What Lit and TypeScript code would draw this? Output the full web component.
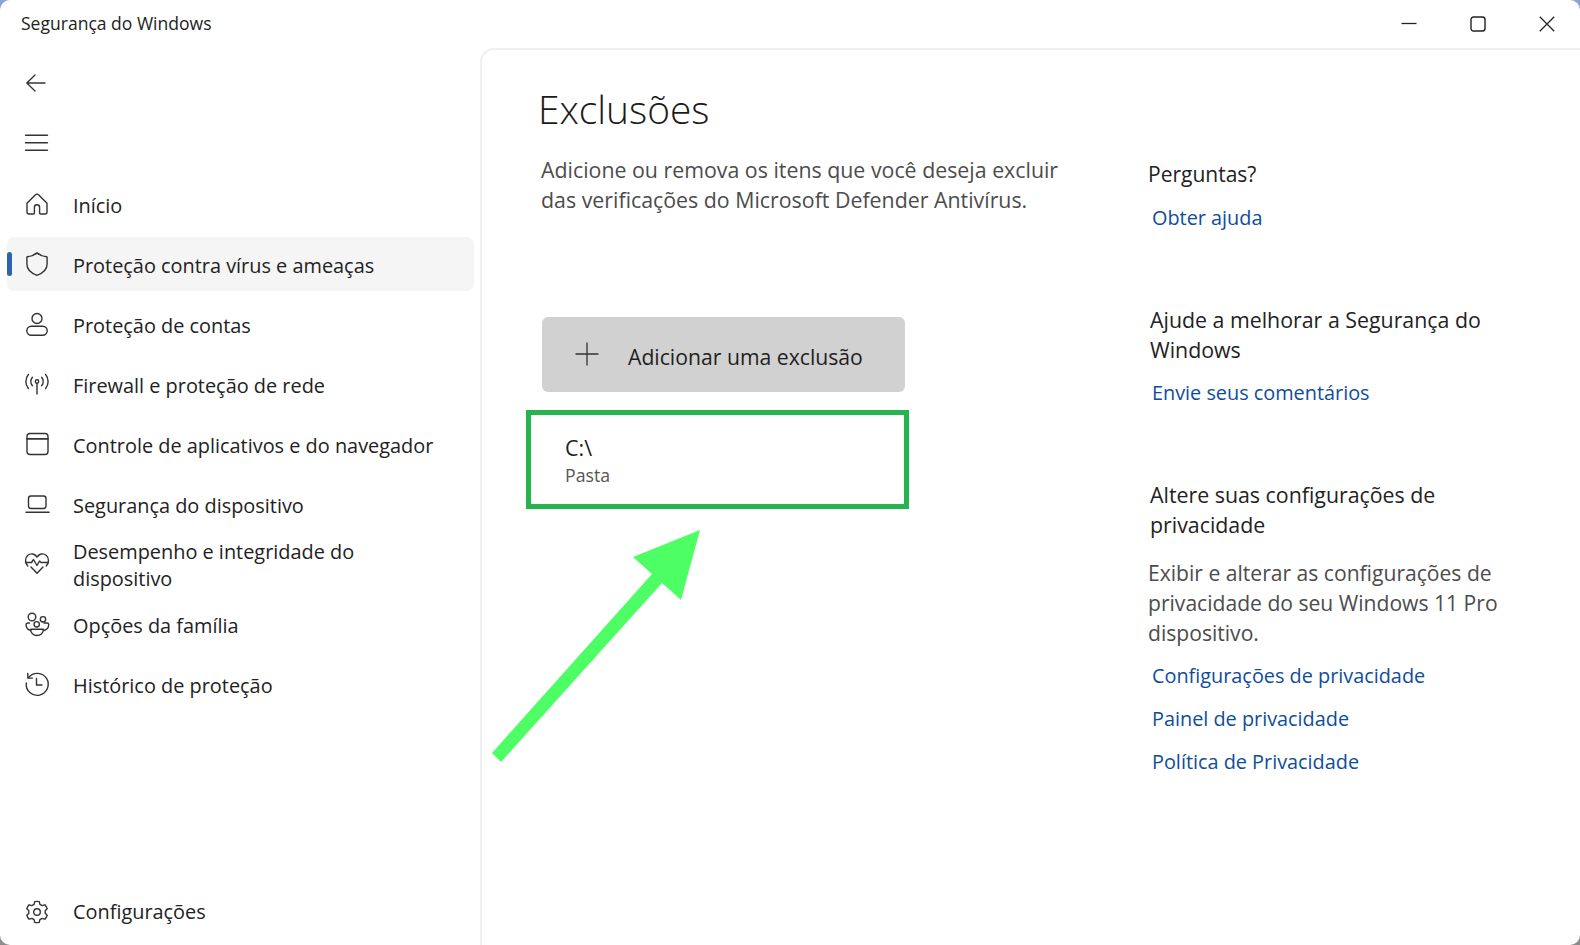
import { LitElement, html, css, svg } from "lit";
import { customElement } from "lit/decorators.js";

const I = (c: unknown) => html`<svg class="ic" viewBox="0 0 24 24" fill="none" stroke="#333" stroke-width="1.4" stroke-linecap="round" stroke-linejoin="round">${c}</svg>`;

const icons = {
  home: svg`<path d="M2 11.2 10.2 2.9a2.5 2.5 0 0 1 3.6 0L22 11.2V20a2 2 0 0 1-2 2h-4.4a1 1 0 0 1-1-1v-5.6a2.6 2.6 0 0 0-5.2 0V21a1 1 0 0 1-1 1H4a2 2 0 0 1-2-2z"/>`,
  shield: svg`<path d="M12 .9C9.2 3.300 6 4.500 2.400 4.700a.6.6 0 0 0-.5.6V12c0 5 3.400 8.900 10.100 11.300 6.700-2.400 10.100-6.300 10.100-11.300V5.300a.6.6 0 0 0-.5-.6C18 4.500 14.800 3.300 12 .9z"/>`,
  person: svg`<circle cx="12" cy="6.500" r="5"/><rect x="1.800" y="14.200" width="20.400" height="9" rx="4.500"/>`,
  wifi: svg`<circle cx="12" cy="9.500" r="1.700"/><path d="M12 11.500V22"/><path d="M7.400 5.200a7 7 0 0 0 0 8.600"/><path d="M16.600 5.200a7 7 0 0 1 0 8.600"/><path d="M3.400 2.500a11 11 0 0 0 0 14"/><path d="M20.600 2.500a11 11 0 0 1 0 14"/>`,
  app: svg`<rect x="2" y="1.500" width="21" height="21" rx="3"/><path d="M2 6.800h21" stroke-width="1.800"/>`,
  laptop: svg`<rect x="3.500" y="4" width="17.500" height="12.500" rx="2.400"/><path d="M1 20.300h23" stroke-width="1.600"/>`,
  heart: svg`<path d="M2.800 14C-.2 10.800-.2 6 2.800 3.300c3.200-2.400 7-1.600 9.200 1.700 2.200-3.300 6-4.100 9.200-1.700 3 2.700 3 7.500 0 10.700"/><path d="M.5 10.500h6l2-3 3.500 6 2.500-4.500 1.500 1.500h7.500"/><path d="M6 15l6 6.300 6-6.300"/>`,
  family: svg`<circle cx="7" cy="5" r="3.800"/><circle cx="18" cy="7.300" r="2.700"/><circle cx="11.700" cy="12.300" r="2.700"/><path d="M4.500 11H2.800a1.700 1.700 0 0 0-1.700 1.700c0 2.500 1.500 4.800 4.400 5.800"/><path d="M19 11h3a1.700 1.700 0 0 1 1.700 1.700c0 2.500-1.500 4.800-4.800 5.800"/><path d="M5.700 17.300h12.600v.5c0 3-2.500 5.700-6.300 5.700s-6.300-2.700-6.300-5.700z"/>`,
  history: svg`<path d="M3.600 5.500A11 11 0 1 1 1.300 11"/><path d="M2.800 1.500v4.600h4.700"/><path d="M11.500 6.500V13h5.500"/>`,
  gear: svg`<circle cx="12" cy="12" r="3.300"/><path d="M9.700 1.600a10.500 10.500 0 0 1 4.600 0l.6 2.700 2.300 1.300 2.700-.8a10.500 10.500 0 0 1 2.300 4l-2 1.900v2.600l2 1.900a10.500 10.500 0 0 1-2.300 4l-2.700-.8-2.300 1.300-.6 2.700a10.500 10.500 0 0 1-4.600 0l-.6-2.700-2.300-1.300-2.700.8a10.500 10.500 0 0 1-2.300-4l2-1.900v-2.600l-2-1.900a10.500 10.500 0 0 1 2.300-4l2.700.8 2.300-1.300z"/>`,
};

@customElement("app-root")
export class AppRoot extends LitElement {
  static styles = css`
    :host { display: block; position: relative; width: 1580px; height: 945px; overflow: hidden;
      background: linear-gradient(180deg, #8aa3d4 0, #8aa3d4 40px, #8c8c8c 900px);
      font-family: "Open Sans", "Noto Sans", sans-serif; color: #1f1f1f; }
    .window { display: flex; flex-direction: column; width: 1580px; height: 945px; background: #fff; border-radius: 10px; overflow: hidden; }
    .titlebar { display: flex; align-items: center; height: 48px; flex: none; padding-right: 25px; }
    .apptitle { font-size: 17.55px; margin-left: 21px; flex: 1; color: #222; padding-bottom: 2px; }
    .winbtns { display: flex; gap: 53px; }
    .winbtns svg { width: 16px; height: 16px; display: block; }
    .body { display: flex; flex: 1; min-height: 0; }
    nav { width: 480px; flex: none; display: flex; flex-direction: column; padding-bottom: 3px; box-sizing: border-box; }
    .tool { height: 60px; display: flex; align-items: center; padding-left: 24px; flex: none; }
    .tool.first { margin-top: 5px; }
    .tools { margin-bottom: 1px; }
    .row { height: 54px; margin: 3px 6px 3px 7px; display: flex; align-items: center; padding-left: 18px; border-radius: 7px; position: relative; flex: none; font-size: 19.9px; color: #222; }
    .row.sel { background: #f5f5f5; }
    .row.sel::before { content: ""; position: absolute; left: 0; top: 15px; width: 5px; height: 24px; border-radius: 3px; background: #2f62b0; }
    .row.last { margin-top: auto; }
    .ic { width: 24px; height: 24px; flex: none; display: block; overflow: visible; }
    .label { margin-left: 24px; line-height: 27.5px; padding-top: 4px; white-space: nowrap; }
    .label.two { padding-top: 2px; }
    .last .label { padding-top: 0; }
    main { flex: 1; border-top: 2px solid #f0f0f0; border-left: 2px solid #f0f0f0; border-top-left-radius: 14px; display: flex; padding-left: 58px; }
    .left { width: 609px; flex: none; }
    h1 { font-size: 38.9px; font-weight: 300; line-height: 50px; margin: 34px 0 0 -2px; color: #1b1b1b; }
    .desc { font-size: 21.35px; line-height: 30px; color: #4c4c4c; margin: 21px 0 0 1px; white-space: nowrap; }
    .add { margin: 102px 0 0 2px; width: 363px; height: 75px; border-radius: 6px; background: #d1d1d1; display: flex; align-items: center; padding-left: 33px; box-sizing: border-box; font-size: 21.2px; color: #1f1f1f; }
    .add svg { width: 24px; height: 24px; flex: none; margin-bottom: 2px; }
    .add span { margin-left: 29px; padding-top: 3px; }
    .item { margin: 18px 0 0 -14px; width: 383px; height: 99px; box-sizing: border-box; border: 5px solid #27b350; padding: 18px 0 0 34px; }
    .item .p { font-size: 21.5px; line-height: 28px; padding-top: 1px; margin-bottom: -1px; }
    .item .s { font-size: 17.7px; line-height: 28px; color: #555; }
    .right { width: 400px; flex: none; padding-top: 109px; }
    .h { font-size: 21.35px; line-height: 30px; color: #222; white-space: nowrap; padding-left: 1px; }
    .h.one { padding-left: 0; margin-left: -1px; font-size: 21px; }
    .t { font-size: 21.1px; line-height: 30px; color: #4c4c4c; margin: 18px 0 0 -1px; white-space: nowrap; }
    .a { display: block; font-size: 19.85px; line-height: 30px; color: #0f4c9c; margin-top: 13px; margin-left: 3px; text-decoration: none; white-space: nowrap; }
    .h.one + .a { margin-top: 14px; }
    .g1 { margin-top: 72px; }
    .g2 { margin-top: 72px; }
    .overlay { position: absolute; left: 0; top: 0; width: 1580px; height: 945px; pointer-events: none; }
  `;

  render() {
    const rows: [unknown, unknown, boolean?, boolean?][] = [
      [icons.home, "Início"],
      [icons.shield, "Proteção contra vírus e ameaças", true],
      [icons.person, "Proteção de contas"],
      [icons.wifi, "Firewall e proteção de rede"],
      [icons.app, "Controle de aplicativos e do navegador"],
      [icons.laptop, "Segurança do dispositivo"],
      [icons.heart, html`Desempenho e integridade do<br />dispositivo`, false, true],
      [icons.family, "Opções da família"],
      [icons.history, "Histórico de proteção"],
    ];
    return html`
      <div class="window">
        <div class="titlebar">
          <div class="apptitle">Segurança do Windows</div>
          <div class="winbtns">
            <svg viewBox="0 0 16 16" fill="none" stroke="#222" stroke-width="1.3"><path d="M.5 7.5h15"/></svg>
            <svg viewBox="0 0 16 16" fill="none" stroke="#222" stroke-width="1.4"><rect x="1" y="1" width="14" height="14" rx="2.5"/></svg>
            <svg viewBox="0 0 16 16" fill="none" stroke="#222" stroke-width="1.3"><path d="M.8.8l14.400 14.400M15.200.8.8 15.200"/></svg>
          </div>
        </div>
        <div class="body">
          <nav>
            <div class="tools">
              <div class="tool first">${I(svg`<path d="M3 12h18M11 4l-8.200 8 8.200 8" stroke-width="1.3"/>`)}</div>
              <div class="tool">${I(svg`<path d="M1.500 4.200h22M1.500 11.700h22M1.500 19.200h22" stroke-width="1.4"/>`)}</div>
            </div>
            ${rows.map(([ic, t, s, two]) => html`
              <div class="row ${s ? "sel" : ""}">${I(ic)}<div class="label ${two ? "two" : ""}">${t}</div></div>`)}
            <div class="row last">${I(icons.gear)}<div class="label">Configurações</div></div>
          </nav>
          <main>
            <div class="left">
              <h1>Exclusões</h1>
              <div class="desc">Adicione ou remova os itens que você deseja excluir<br />das verificações do Microsoft Defender Antivírus.</div>
              <div class="add">
                <svg viewBox="0 0 24 24" fill="none" stroke="#333" stroke-width="1.3"><path d="M12 .5v23M.5 12h23"/></svg>
                <span>Adicionar uma exclusão</span>
              </div>
              <div class="item">
                <div class="p">C:\\</div>
                <div class="s">Pasta</div>
              </div>
            </div>
            <div class="right">
              <div class="h one">Perguntas?</div>
              <a class="a">Obter ajuda</a>
              <div class="h g1">Ajude a melhorar a Segurança do<br />Windows</div>
              <a class="a">Envie seus comentários</a>
              <div class="h g2">Altere suas configurações de<br />privacidade</div>
              <div class="t">Exibir e alterar as configurações de<br />privacidade do seu Windows 11 Pro<br />dispositivo.</div>
              <a class="a">Configurações de privacidade</a>
              <a class="a">Painel de privacidade</a>
              <a class="a">Política de Privacidade</a>
            </div>
          </main>
        </div>
      </div>
      <svg class="overlay" viewBox="0 0 1580 945">
        <polygon fill="#4dff64" points="700,530 633,557 652,574 492,753 501,762 662,583 681,600"/>
      </svg>
    `;
  }
}
